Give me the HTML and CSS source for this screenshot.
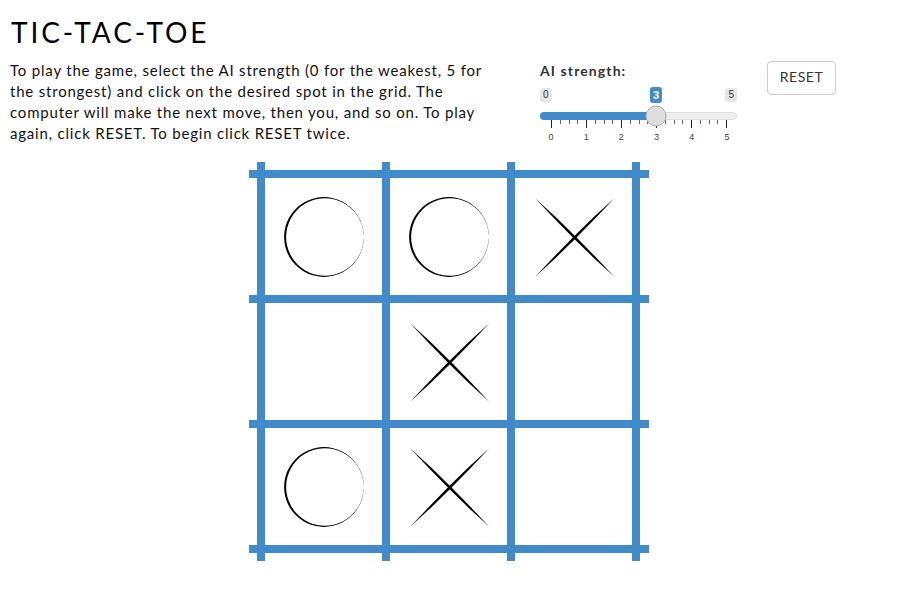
FILE: index.html
```html
<!DOCTYPE html>
<html lang="en">
<head>
<meta charset="utf-8">
<title>Tic-Tac-Toe</title>
<link rel="stylesheet" href="styles.css">
</head>
<body>
<main class="page">
  <h1 class="title">TIC-TAC-TOE</h1>
  <section class="intro">
    <p class="howto">To play the game, select the AI strength (0 for the weakest, 5 for<br>the strongest) and click on the desired spot in the grid. The<br>computer will make the next move, then you, and so on. To play<br>again, click RESET. To begin click RESET twice.</p>
    <div class="strength">
      <div class="strength-label">AI strength:</div>
      <div class="slider">
        <div class="bounds">
          <span class="bound">0</span>
          <span class="bound">5</span>
          <span class="value" style="left:58.9%">3</span>
        </div>
        <div class="track">
          <div class="fill" style="width:58.9%"></div>
          <div class="handle" style="left:58.9%"></div>
        </div>
        <div class="ticks">
          <i class="tick major"></i><i class="tick"></i><i class="tick"></i><i class="tick"></i>
          <i class="tick major"></i><i class="tick"></i><i class="tick"></i><i class="tick"></i>
          <i class="tick major"></i><i class="tick"></i><i class="tick"></i><i class="tick"></i>
          <i class="tick major"></i><i class="tick"></i><i class="tick"></i><i class="tick"></i>
          <i class="tick major"></i><i class="tick"></i><i class="tick"></i><i class="tick"></i>
          <i class="tick major"></i>
        </div>
        <div class="tick-labels">
          <span>0</span><span>1</span><span>2</span><span>3</span><span>4</span><span>5</span>
        </div>
      </div>
    </div>
    <button class="reset" type="button">RESET</button>
  </section>
  <svg class="board" width="400" height="399" viewBox="0 0 400 399" role="img" aria-label="Tic-tac-toe board">
    <defs>
      <path id="o" d="M39.84 -2.09A39.9 39.9 0 1 0 39.84 2.09L39.64 2.09A38.8 38.8 0 1 1 39.64 -2.09Z"/>
      <path id="x" d="M-39.6 -39.3L-19.3 -20.7L0.9 -0.9L20.7 19.3L39.6 39.3L19.3 20.7L-0.9 0.9L-20.7 -19.3ZM39.6 -39.3L20.7 -19.3L0.9 0.9L-19.3 20.7L-39.6 39.3L-20.7 19.3L-0.9 -0.9L19.3 -20.7Z"/>
    </defs>
    <g fill="#428bca">
      <rect x="8" y="0" width="8" height="399"/>
      <rect x="133" y="0" width="8" height="399"/>
      <rect x="258" y="0" width="8" height="399"/>
      <rect x="383" y="0" width="8" height="399"/>
      <rect x="0" y="8" width="400" height="8"/>
      <rect x="0" y="133" width="400" height="8"/>
      <rect x="0" y="258" width="400" height="8"/>
      <rect x="0" y="383" width="400" height="8"/>
    </g>
    <use href="#o" x="75" y="75"/>
    <use href="#o" x="200" y="75"/>
    <use href="#x" x="325.7" y="75.5"/>
    <use href="#x" x="200.7" y="200.5"/>
    <use href="#o" x="75" y="325"/>
    <use href="#x" x="200.7" y="325.5"/>
  </svg>
</main>
</body>
</html>
```

FILE: styles.css
```css
* { box-sizing: border-box; }

html, body {
  margin: 0;
  background: #fff;
}

body {
  font-family: "Lato", "Liberation Sans", sans-serif;
  color: #111;
  overflow: hidden;
}

.page {
  height: 595px;
  padding-top: 14px;
}

.title {
  margin: 0 0 0 11px;
  height: 37px;
  font-size: 28px;
  line-height: 37px;
  font-weight: 400;
  letter-spacing: 2.9px;
  color: #000;
}

.intro {
  display: flex;
  align-items: flex-start;
  height: 101px;
  padding-left: 10px;
  margin-top: 10px;
}

.howto {
  margin: -1px 0 0;
  width: 530px;
  font-size: 15px;
  line-height: 21px;
  letter-spacing: 0.8px;
  white-space: nowrap;
}

.strength {
  width: 197px;
  flex: none;
}

.strength-label {
  font-size: 14px;
  line-height: 20px;
  font-weight: 700;
  letter-spacing: 1.1px;
  color: #333;
}

.slider {
  font-family: "Liberation Sans", Arial, sans-serif;
  margin-top: 7px;
}

.bounds {
  position: relative;
  display: flex;
  justify-content: space-between;
  height: 15px;
}

.bound {
  padding: 0 3px;
  height: 14px;
  font-size: 10px;
  line-height: 14px;
  border-radius: 3px;
  background: #e6e6e6;
  color: #333;
}

.value {
  position: absolute;
  top: -1px;
  transform: translateX(-50%);
  padding: 0 3px;
  height: 16px;
  font-size: 11px;
  line-height: 16px;
  font-weight: 700;
  border-radius: 3px;
  background: #428bca;
  color: #fff;
}

.track {
  position: relative;
  height: 8px;
  margin-top: 9px;
  border: 1px solid #ddd;
  border-radius: 4px;
  background: #eee;
}

.fill {
  position: absolute;
  left: -1px;
  top: -1px;
  height: 8px;
  border-radius: 4px 0 0 4px;
  background: #428bca;
}

.handle {
  position: absolute;
  top: 50%;
  width: 21px;
  height: 21px;
  transform: translate(-50%, -50%);
  border: 1px solid #aaa;
  border-radius: 50%;
  background: #dedede;
}

.ticks {
  display: flex;
  justify-content: space-between;
  align-items: flex-start;
  height: 8px;
  padding: 0 10px 0 11px;
}

.tick {
  display: block;
  width: 1px;
  height: 4px;
  background: #666;
}

.tick.major {
  height: 8px;
  background: #222;
}

.tick-labels {
  display: flex;
  justify-content: space-between;
  padding: 0 4px 0 5px;
  margin-top: 3px;
  font-size: 9px;
  line-height: 12px;
  color: #444;
}

.tick-labels span {
  width: 12px;
  text-align: center;
}

.reset {
  flex: none;
  width: 69px;
  height: 34px;
  margin-left: 30px;
  padding: 0 0 3px;
  border: 1px solid #ccc;
  border-radius: 4px;
  background: #fff;
  color: #333;
  font-family: inherit;
  font-size: 14px;
  letter-spacing: 0.5px;
}

.board {
  display: block;
  margin: 0 auto;
}
```
